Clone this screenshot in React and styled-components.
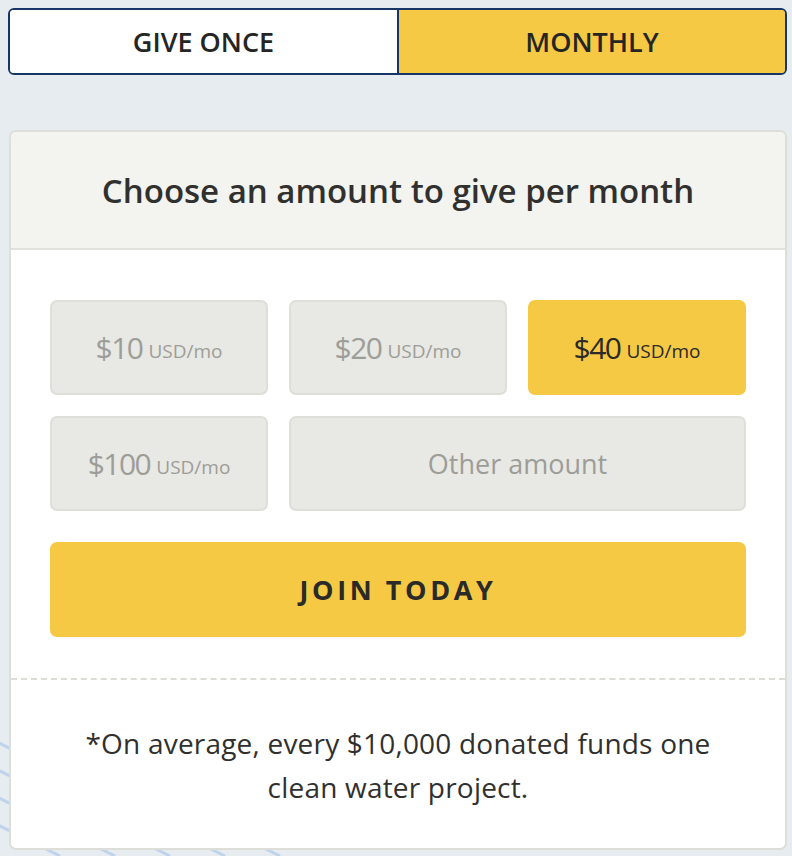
import styled, { createGlobalStyle } from "styled-components"

const Global = createGlobalStyle`
    body{
        margin:0;
        background:#e7ecf1;
        font-family:"Open Sans", Lato, sans-serif;
        color:#2f2f2d;
    }
`
const Page = styled.div`
    position:relative;
    padding:8px 5px 5px 8px;
    min-height:843px;
    overflow:hidden;
`
const Waves = styled.svg`
    position:absolute;
    left:0;
    bottom:0;
    z-index:0;
`
const Toggle = styled.div`
    position:relative;
    z-index:1;
    display:grid;
    grid-template-columns:387px 1fr;
    height:63px;
    border:2px solid #173565;
    border-radius:6px;
    overflow:hidden;
`
const Tab = styled.div`
    display:flex;
    align-items:center;
    justify-content:center;
    font-size:27px;
    font-weight:600;
    color:#252523;
    background:${p=>p.active ? '#f6c944' : '#fff'};
    border-left:${p=>p.active ? '2px solid #173565' : '0'};
`
const Card = styled.div`
    position:relative;
    z-index:1;
    margin:55px 0 0 1px;
    background:#fff;
    border:2px solid #deded8;
    border-radius:7px;
    overflow:hidden;
`
const CardHeader = styled.div`
    height:116px;
    display:flex;
    align-items:center;
    justify-content:center;
    background:#f3f3ef;
    border-bottom:2px solid #e1e1dc;
`
const Title = styled.h2`
    margin:0;
    font-size:33px;
    font-weight:600;
    color:#30302e;
`
const Body = styled.div`
    padding:50px 39px 41px;
    border-bottom:2px dashed #dcdcd6;
`
const Amounts = styled.div`
    display:grid;
    grid-template-columns:repeat(3, 1fr);
    gap:21px;
`
const Amount = styled.div`
    height:95px;
    box-sizing:border-box;
    display:flex;
    align-items:center;
    justify-content:center;
    gap:6px;
    grid-column:${p=>p.wide ? 'span 2' : 'auto'};
    border-radius:7px;
    border:2px solid ${p=>p.active ? '#f6c944' : '#dfdfd9'};
    background:${p=>p.active ? '#f6c944' : '#e8e8e4'};
    color:${p=>p.active ? '#2a2a28' : '#9d9d98'};
    font-size:${p=>p.wide ? '27px' : '30px'};
    letter-spacing:${p=>p.wide ? '0' : '-1.5px'};
`
const Unit = styled.span`
    font-size:19px;
    letter-spacing:0;
    margin-top:6px;
`
const Join = styled.div`
    margin-top:31px;
    height:95px;
    display:flex;
    align-items:center;
    justify-content:center;
    background:#f6c944;
    border-radius:7px;
    font-size:27px;
    font-weight:700;
    letter-spacing:3.6px;
    color:#2a2a28;
`
const Note = styled.p`
    margin:0 auto;
    padding:41px 0 39px;
    max-width:680px;
    text-align:center;
    font-size:28px;
    letter-spacing:0.2px;
    line-height:44px;
    color:#30302e;
`

const amounts = [
    { value: '$10' },
    { value: '$20' },
    { value: '$40', active: true },
    { value: '$100' },
]

export default function App()
{
    return(
        <Page>
            <Global/>
            <Waves width="300" height="130" viewBox="0 0 300 130">
                {[0,1,2,3,4,5,6,7].map(i=>(
                    <line key={i} x1={-200 + i*55} y1={0} x2={60 + i*55} y2={130}
                        stroke="#bfd3ea" strokeWidth="3"/>
                ))}
            </Waves>
            <Toggle>
                <Tab>GIVE ONCE</Tab>
                <Tab active>MONTHLY</Tab>
            </Toggle>
            <Card>
                <CardHeader>
                    <Title>Choose an amount to give per month</Title>
                </CardHeader>
                <Body>
                    <Amounts>
                        {amounts.map(a=>(
                            <Amount key={a.value} active={a.active}>
                                {a.value}<Unit>USD/mo</Unit>
                            </Amount>
                        ))}
                        <Amount wide>Other amount</Amount>
                    </Amounts>
                    <Join>JOIN TODAY</Join>
                </Body>
                <Note>*On average, every $10,000 donated funds one clean water project.</Note>
            </Card>
        </Page>
    )
}
